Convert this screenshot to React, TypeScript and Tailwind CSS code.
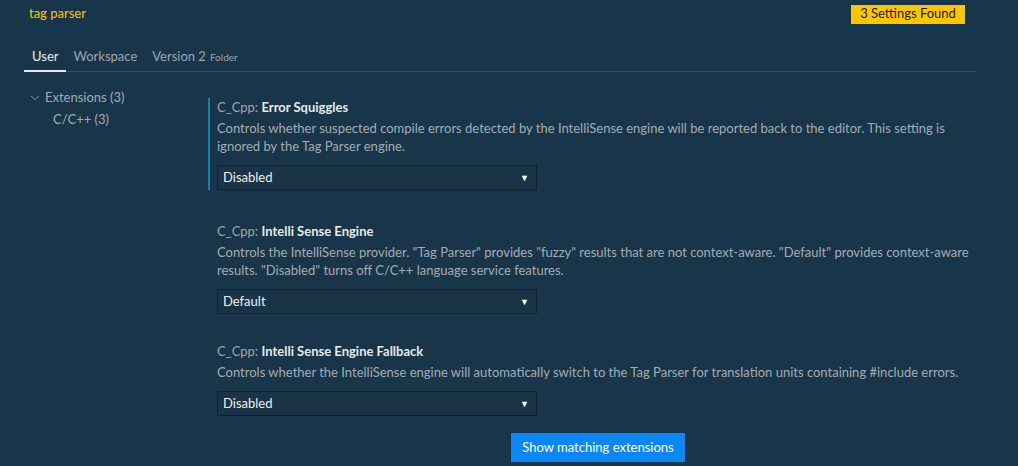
import { ChevronDown } from "lucide-react";

interface SettingProps {
  title: string;
  description: string;
  value: string;
  focused?: boolean;
}

function Setting({ title, description, value, focused }: SettingProps) {
  return (
    <div
      className={`border-l-2 pl-[7px] ${focused ? "border-[#1483a8]" : "border-transparent"}`}
    >
      <div className="h-[18px] leading-[18px] text-[13px] text-[#9da6ae]">
        C_Cpp: <span className="font-bold text-[#e6e9ec]">{title}</span>
      </div>
      <p className="mt-[3px] max-w-[762px] text-[13px] leading-[18px] text-[#a3acb4]">
        {description}
      </p>
      <div className="mt-[10px] flex h-[25px] w-[320px] items-center justify-between border border-[#0e2231] bg-[#1a3347] pl-[5px] pr-[7px] text-[13px] text-[#eef0f2]">
        <span>{value}</span>
        <span className="text-[9px] text-white">▼</span>
      </div>
    </div>
  );
}

export default function App() {
  return (
    <div
      className="h-[466px] w-[1018px] overflow-hidden bg-[#193549]"
      style={{ fontFamily: "Lato, 'Open Sans', sans-serif" }}
    >
      <div className="-mt-px ml-[25px] flex h-[30px] w-[951px] items-center justify-between border border-[#0d3a58] pl-[3px] pr-[10px]">
        <span className="-mt-px text-[13px] text-[#ffc600]">tag parser</span>
        <span className="flex h-[19px] w-[114px] items-center justify-center bg-[#ffc600] text-[13px] text-[#1c1c1c]">
          3 Settings Found
        </span>
      </div>

      <div className="ml-[24px] mt-[15px] flex h-[28px] w-[952px] items-end border-b border-[#3a4b59] text-[13px]">
        <div className="-mb-px border-b-2 border-[#e8e8e8] px-[8px] pb-[4px] text-[#ececec]">User</div>
        <div className="pl-[7px] pr-[8px] pb-[5px] text-[#9ca6ae]">Workspace</div>
        <div className="flex items-baseline gap-[4px] px-[7px] pb-[5px] text-[#9ca6ae]">
          Version 2 <span className="text-[10px]">Folder</span>
        </div>
      </div>

      <div className="ml-[24px] mt-[17px] flex">
        <div className="w-[184px] text-[13px] text-[#a3acb4]">
          <div className="flex h-[18px] items-center gap-[3px] pl-[4px]">
            <ChevronDown size={14} strokeWidth={1.5} className="text-[#a3acb4]" />
            <span>Extensions (3)</span>
          </div>
          <div className="mt-[3px] h-[18px] pl-[29px] leading-[18px]">C/C++ (3)</div>
        </div>

        <div className="flex w-[768px] flex-col gap-[32px] pt-[9px]">
          <Setting
            focused
            title="Error Squiggles"
            description="Controls whether suspected compile errors detected by the IntelliSense engine will be reported back to the editor. This setting is ignored by the Tag Parser engine."
            value="Disabled"
          />
          <Setting
            title="Intelli Sense Engine"
            description={'Controls the IntelliSense provider. "Tag Parser" provides "fuzzy" results that are not context-aware. "Default" provides context-aware results. "Disabled" turns off C/C++ language service features.'}
            value="Default"
          />
          <div className="-mt-[4px]">
            <Setting
              title="Intelli Sense Engine Fallback"
              description="Controls whether the IntelliSense engine will automatically switch to the Tag Parser for translation units containing #include errors."
              value="Disabled"
            />
            <div className="mt-[17px] flex justify-center pl-[12px]">
              <button className="h-[29px] w-[174px] bg-[#0a87f5] text-[13px] text-white">
                Show matching extensions
              </button>
            </div>
          </div>
        </div>
      </div>
    </div>
  );
}
